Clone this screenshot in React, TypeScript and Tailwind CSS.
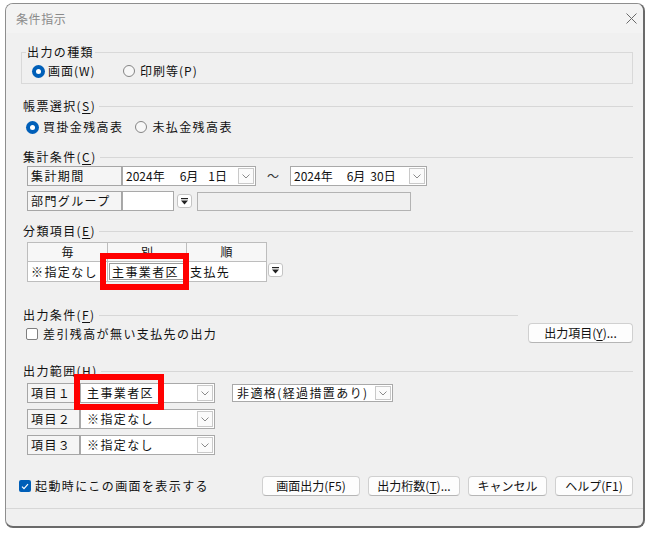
import React from "react";

function Mn({ c }: { c: string }) {
  return <span className="underline underline-offset-[2px] decoration-1">{c}</span>;
}

function Header({ children, lineEnd = "" }: { children: React.ReactNode; lineEnd?: string }) {
  return (
    <div className="flex items-center h-[16px]">
      <span className="pl-[2px] tracking-[1.4px] leading-[16px] whitespace-nowrap">{children}</span>
      <div className={`flex-1 h-px bg-[#d7d7d7] ml-[3px] ${lineEnd}`} />
    </div>
  );
}

function RadioOn() {
  return (
    <div className="w-[13px] h-[13px] rounded-full bg-[#005fb8] flex items-center justify-center shrink-0">
      <div className="w-[5px] h-[5px] rounded-full bg-white" />
    </div>
  );
}

function RadioOff({ className = "" }: { className?: string }) {
  return <div className={`w-[12px] h-[12px] rounded-full border border-[#858585] bg-[#f7f7f7] shrink-0 ${className}`} />;
}

function Chevron() {
  return (
    <svg width="8" height="5" viewBox="0 0 8 5">
      <polyline points="0.5,0.5 4,4 7.5,0.5" fill="none" stroke="#8a8a8a" strokeWidth="1" />
    </svg>
  );
}

function DropBtn() {
  return (
    <div className="w-[16px] shrink-0 my-[1px] mr-[1px] border border-[#c9c9c9] bg-[#fbfbfb] flex items-center justify-center">
      <Chevron />
    </div>
  );
}

function Combo({ w, pl, children }: { w: string; pl: string; children: React.ReactNode }) {
  return (
    <div className={`${w} h-full border border-[#a9a9a9] bg-white flex`}>
      <div className={`flex-1 flex items-center ${pl} tracking-[1.4px] whitespace-nowrap overflow-hidden`}>{children}</div>
      <DropBtn />
    </div>
  );
}

function LabelBox({ w, children }: { w: string; children: React.ReactNode }) {
  return (
    <div className={`${w} h-full border border-[#a6a6a6] bg-[#f5f5f5] flex items-center pl-[3px] tracking-[1.4px] whitespace-nowrap`}>
      {children}
    </div>
  );
}

function MiniBtn() {
  return (
    <div className="w-[15px] h-[14px] border border-[#c4c4c4] rounded-[3px] bg-white flex items-center justify-center">
      <svg width="7" height="7" viewBox="0 0 7 7">
        <rect x="0" y="0" width="7" height="1.2" fill="#222" />
        <polygon points="0,2.6 7,2.6 3.5,6.6" fill="#222" />
      </svg>
    </div>
  );
}

function Btn({ w, children }: { w: string; children: React.ReactNode }) {
  return (
    <div className={`${w} h-[20px] rounded-[4px] border border-[#d0d0d0] border-b-[#b5b5b5] bg-[#fdfdfd] flex items-center justify-center whitespace-nowrap`}>
      {children}
    </div>
  );
}

export default function App() {
  return (
    <div className="w-[650px] h-[533px] bg-white pt-[3px] pl-[5px] text-[12px] leading-[16px] text-[#111] font-['Noto_Sans_CJK_JP','Noto_Sans',sans-serif]">
      <div className="w-[640px] h-[525px] border-t border-l border-[#8e8e8e] border-r-2 border-b-2 border-r-[#6a6a6a] border-b-[#6a6a6a] rounded-[8px] bg-[#f0f0f0] flex flex-col overflow-hidden">
        {/* title bar */}
        <div className="h-[29px] shrink-0 bg-[#f3f3f3] flex items-center pl-[10px] pr-[6px]">
          <span className="text-[#8a8a8a] tracking-[0.6px]">条件指示</span>
          <svg className="ml-auto" width="11" height="11" viewBox="0 0 11 11">
            <line x1="0.5" y1="0.5" x2="10.5" y2="10.5" stroke="#6a6a6a" strokeWidth="1" />
            <line x1="10.5" y1="0.5" x2="0.5" y2="10.5" stroke="#6a6a6a" strokeWidth="1" />
          </svg>
        </div>

        {/* body */}
        <div className="pl-[15px] pr-[10px] flex flex-col">
          {/* 出力の種類 */}
          <fieldset className="mt-[11px] border border-[#d9d9d9] pb-[3px]">
            <legend className="ml-[4px] px-[1px] tracking-[1.4px] leading-[16px]">出力の種類</legend>
            <div className="flex items-center h-[18px] mt-[2px] pl-[10px]">
              <div className="w-[91px] flex items-center">
                <RadioOn />
                <span className="ml-[3px] tracking-[1px]">画面(W)</span>
              </div>
              <RadioOff />
              <span className="ml-[5px] tracking-[1px]">印刷等(P)</span>
            </div>
          </fieldset>

          {/* 帳票選択 */}
          <div className="mt-[14px]">
            <Header>
              帳票選択(<Mn c="S" />)
            </Header>
          </div>
          <div className="flex items-center h-[18px] mt-[4px] pl-[5px]">
            <RadioOn />
            <span className="ml-[4px] tracking-[1.4px]">買掛金残高表</span>
            <RadioOff className="ml-[12px]" />
            <span className="ml-[5px] tracking-[1.4px]">未払金残高表</span>
          </div>

          {/* 集計条件 */}
          <div className="mt-[13px]">
            <Header>
              集計条件(<Mn c="C" />)
            </Header>
          </div>
          <div className="ml-[6px] mt-[1px] h-[20px] flex items-stretch">
            <LabelBox w="w-[95px]">集計期間</LabelBox>
            <Combo w="w-[134px]" pl="pl-[3px]">
              <span className="tracking-normal">2024年</span>
              <span className="ml-[15px] tracking-normal">6月</span>
              <span className="ml-[10px] tracking-normal">1日</span>
            </Combo>
            <div className="w-[34px] flex items-center justify-center text-[#333]">〜</div>
            <Combo w="w-[137px]" pl="pl-[3px]">
              <span className="tracking-normal">2024年</span>
              <span className="ml-[14px] tracking-normal">6月</span>
              <span className="ml-[5px] tracking-normal">30日</span>
            </Combo>
          </div>
          <div className="ml-[6px] mt-[5px] h-[20px] flex items-center">
            <LabelBox w="w-[95px]">部門グループ</LabelBox>
            <div className="w-[52px] h-full border border-[#a9a9a9] bg-white" />
            <div className="ml-[3px]">
              <MiniBtn />
            </div>
            <div className="ml-[5px] w-[214px] h-[19px] border border-[#b3b3b3] bg-[#f0f0f0]" />
          </div>

          {/* 分類項目 */}
          <div className="mt-[12px]">
            <Header>
              分類項目(<Mn c="E" />)
            </Header>
          </div>
          <div className="relative ml-[6px] mt-[3px] flex items-start">
            <div className="border-l border-t border-[#bdbdbd]">
              <div className="flex h-[19px] bg-[#f7f7f7]">
                <div className="w-[80px] border-r border-b border-[#bdbdbd] flex items-center justify-center">毎</div>
                <div className="w-[79px] border-r border-b border-[#bdbdbd] flex items-center justify-center">別</div>
                <div className="w-[80px] border-r border-b border-[#bdbdbd] flex items-center justify-center">順</div>
              </div>
              <div className="flex h-[20px] bg-white">
                <div className="w-[80px] border-r border-b border-[#bdbdbd] flex items-center pl-[3px] tracking-[1.4px]">※指定なし</div>
                <div className="w-[79px] border-r border-b border-[#bdbdbd] flex">
                  <div className="flex-1 m-[1px] border border-[#9c9c9c] flex items-center pl-[2px] tracking-[1.4px]">主事業者区</div>
                </div>
                <div className="w-[80px] border-r border-b border-[#bdbdbd] flex items-center pl-[3px] tracking-[1.4px]">支払先</div>
              </div>
            </div>
            <div className="ml-[1px] mt-[21px]">
              <MiniBtn />
            </div>
            <div className="absolute left-[73px] top-[11px] w-[89px] h-[37px] border-[6px] border-[#ff0000]" />
          </div>

          {/* 出力条件 */}
          <div className="mt-[25px] flex items-end">
            <div className="flex-1 flex flex-col">
              <Header>
                出力条件(<Mn c="F" />)
              </Header>
              <div className="flex items-center h-[16px] mt-[3px] pl-[5px]">
                <div className="w-[12px] h-[12px] border border-[#7f7f7f] rounded-[2px] bg-white shrink-0" />
                <span className="ml-[5px] tracking-[1.4px]">差引残高が無い支払先の出力</span>
              </div>
            </div>
            <div className="ml-[10px] mb-[-1px]">
              <Btn w="w-[105px]">
                <span>
                  出力項目(<Mn c="Y" />)...
                </span>
              </Btn>
            </div>
          </div>

          {/* 出力範囲 */}
          <div className="mt-[21px]">
            <Header>
              出力範囲(<Mn c="H" />)
            </Header>
          </div>
          <div className="relative ml-[6px] mt-[4px] h-[20px] flex items-center">
            <LabelBox w="w-[53px]">項目１</LabelBox>
            <Combo w="w-[135px]" pl="pl-[6px]">主事業者区</Combo>
            <div className="ml-[17px] h-[18px]">
              <Combo w="w-[161px]" pl="pl-[4px]">非適格(経過措置あり)</Combo>
            </div>
            <div className="absolute left-[47px] top-[-9px] w-[90px] h-[36px] border-[6px] border-[#ff0000]" />
          </div>
          <div className="ml-[6px] mt-[6px] h-[20px] flex items-center">
            <LabelBox w="w-[53px]">項目２</LabelBox>
            <Combo w="w-[135px]" pl="pl-[6px]">※指定なし</Combo>
          </div>
          <div className="ml-[6px] mt-[6px] h-[20px] flex items-center">
            <LabelBox w="w-[53px]">項目３</LabelBox>
            <Combo w="w-[135px]" pl="pl-[6px]">※指定なし</Combo>
          </div>

          {/* bottom row */}
          <div className="mt-[21px] h-[20px] flex items-center ml-[-2px]">
            <div className="w-[12px] h-[12px] rounded-[2px] bg-[#005fb8] flex items-center justify-center shrink-0">
              <svg width="8" height="7" viewBox="0 0 8 7">
                <polyline points="1,3.6 3,5.6 7,1.2" fill="none" stroke="#fff" strokeWidth="1.2" />
              </svg>
            </div>
            <span className="ml-[4px] tracking-[1.4px] whitespace-nowrap">起動時にこの画面を表示する</span>
            <div className="ml-auto flex gap-[8px]">
              <Btn w="w-[98px]">画面出力(F5)</Btn>
              <Btn w="w-[92px]">
                <span>
                  出力桁数(<Mn c="T" />)...
                </span>
              </Btn>
              <Btn w="w-[79px]">キャンセル</Btn>
              <Btn w="w-[78px]">ヘルプ(F1)</Btn>
            </div>
          </div>
        </div>

        <div className="mt-[12px] h-px bg-[#d7d7d7] shrink-0" />
        <div className="flex-1" />
      </div>
    </div>
  );
}
